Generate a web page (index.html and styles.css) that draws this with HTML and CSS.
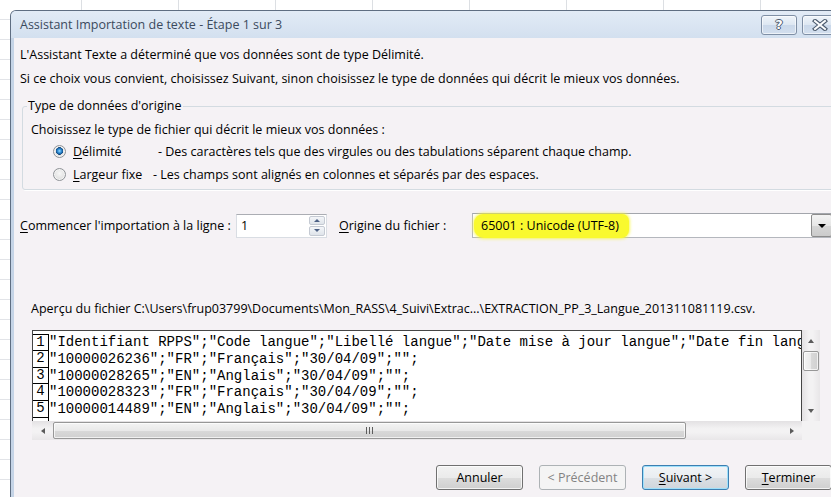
FILE: index.html
```html
<!DOCTYPE html>
<html lang="fr">
<head>
<meta charset="utf-8">
<title>Assistant Importation de texte</title>
<link rel="stylesheet" href="styles.css">
</head>
<body>
<div class="window">
  <div class="titlebar">
    <span class="title">Assistant Importation de texte - Étape 1 sur 3</span>
    <div class="caption-buttons">
      <div class="cap-btn"><span class="help-glyph">?</span></div>
      <div class="cap-btn">
        <svg width="16" height="12" viewBox="0 0 16 12">
          <path d="M3 2 L13 10 M13 2 L3 10" stroke="#4b5a6d" stroke-width="4.2" stroke-linecap="square" fill="none"/>
          <path d="M3 2 L13 10 M13 2 L3 10" stroke="#fbfcfd" stroke-width="2" stroke-linecap="square" fill="none"/>
        </svg>
      </div>
    </div>
  </div>

  <div class="client">
    <p class="intro">L'Assistant Texte a déterminé que vos données sont de type Délimité.</p>
    <p class="intro">Si ce choix vous convient, choisissez Suivant, sinon choisissez le type de données qui décrit le mieux vos données.</p>

    <fieldset class="group">
      <legend>Type de données d'origine</legend>
      <p class="hint">Choisissez le type de fichier qui décrit le mieux vos données :</p>
      <div class="option">
        <span class="radio checked"></span>
        <span class="opt-label"><u>D</u>élimité</span>
        <span>- Des caractères tels que des virgules ou des tabulations séparent chaque champ.</span>
      </div>
      <div class="option">
        <span class="radio"></span>
        <span class="opt-label narrow"><u>L</u>argeur fixe</span>
        <span>- Les champs sont alignés en colonnes et séparés par des espaces.</span>
      </div>
    </fieldset>

    <div class="start-row">
      <span class="start-label"><u>C</u>ommencer l'importation à la ligne :</span>
      <div class="spinner">
        <span class="spin-value">1</span>
        <div class="spin-btns">
          <span class="spin"><span class="tri-up small"></span></span>
          <span class="spin"><span class="tri-down small"></span></span>
        </div>
      </div>
      <span class="origin-label"><u>O</u>rigine du fichier :</span>
      <div class="combo">
        <span class="combo-value"><span class="marker">65001 : Unicode (UTF-8)</span></span>
        <span class="combo-arrow"><span class="tri-down black"></span></span>
      </div>
    </div>

    <p class="caption">Aperçu du fichier C:\Users\frup03799\Documents\Mon_RASS\4_Suivi\Extrac...\EXTRACTION_PP_3_Langue_201311081119.csv.</p>

    <div class="preview">
      <div class="preview-main">
        <div class="preview-text">
          <div class="row"><span class="num first">1</span><span class="line">"Identifiant RPPS";"Code langue";"Libellé langue";"Date mise à jour langue";"Date fin langue"</span></div>
          <div class="row"><span class="num">2</span><span class="line">"10000026236";"FR";"Français";"30/04/09";"";</span></div>
          <div class="row"><span class="num">3</span><span class="line">"10000028265";"EN";"Anglais";"30/04/09";"";</span></div>
          <div class="row"><span class="num">4</span><span class="line">"10000028323";"FR";"Français";"30/04/09";"";</span></div>
          <div class="row"><span class="num">5</span><span class="line">"10000014489";"EN";"Anglais";"30/04/09";"";</span></div>
          <div class="row"><span class="num"></span></div>
        </div>
        <div class="vscroll">
          <span class="sb-btn v"><span class="tri-up"></span></span>
          <span class="vthumb"></span>
          <span class="vtrack"></span>
          <span class="sb-btn v"><span class="tri-down"></span></span>
        </div>
      </div>
      <div class="hscroll-row">
        <div class="hscroll">
          <span class="sb-btn h"><span class="tri-left"></span></span>
          <span class="hthumb"><span class="grip"></span></span>
          <span class="htrack"></span>
          <span class="sb-btn h"><span class="tri-right"></span></span>
        </div>
        <div class="corner"></div>
      </div>
    </div>

    <div class="buttons">
      <button class="btn">Annuler</button>
      <button class="btn disabled">&lt; Précédent</button>
      <button class="btn default"><span><u>S</u>uivant &gt;</span></button>
      <button class="btn"><span><u>T</u>erminer</span></button>
    </div>
  </div>
</div>
</body>
</html>
```

FILE: styles.css
```css
* { box-sizing: border-box; }

html, body { margin: 0; }

/* spreadsheet grid showing around the dialog */
body {
  width: 831px;
  height: 497px;
  overflow: hidden;
  background-color: #fff;
  background-image:
    repeating-linear-gradient(90deg, transparent 0 81px, #dcdfe3 81px 82px, transparent 82px 97px),
    repeating-linear-gradient(180deg, transparent 0 19px, #e2e4e8 19px 20px);
  font-family: "Open Sans", "Liberation Sans", sans-serif;
  font-size: 12.5px;
  color: #000;
}

u { text-decoration-thickness: 1px; text-underline-offset: 2px; }

/* dialog frame */
.window {
  margin: 10px 0 0 10px;
  width: 840px;
  height: 495px;
  border: 1px solid #5f6e82;
  border-bottom: 0;
  border-radius: 6px 6px 0 0;
  background: #c5d4e6;
}

.titlebar {
  height: 27px;
  display: flex;
  align-items: center;
  justify-content: space-between;
  padding: 0 11px 0 9px;
  background: linear-gradient(#e2ebf6, #d3e0ef);
  border-radius: 5px 5px 0 0;
  color: #3b4a5d;
}

.caption-buttons { display: flex; gap: 5px; }

.cap-btn {
  width: 36px;
  height: 20px;
  border: 1px solid #7f8fa5;
  border-radius: 3px;
  background: linear-gradient(#eff4fa, #dde7f2 50%, #cad8ea 51%, #d3dfee);
  box-shadow: inset 0 0 0 1px rgba(255, 255, 255, 0.6);
  display: flex;
  align-items: center;
  justify-content: center;
}

.help-glyph {
  font-family: "DejaVu Sans", sans-serif;
  font-weight: bold;
  font-size: 13px;
  line-height: 1;
  color: #fbfcfd;
  text-shadow: 1px 0 #4b5a6d, -1px 0 #4b5a6d, 0 1px #4b5a6d, 0 -1px #4b5a6d;
}

/* dialog body */
.client {
  margin: 0 3px;
  height: 470px;
  padding-top: 9px;
  background: #f5f2f5;
  overflow: hidden;
}

p { margin: 0; line-height: 16px; }

.intro { padding-left: 6px; }
.intro + .intro { margin-top: 8px; }

.group {
  margin: 11px 8px 0;
  padding: 0 0 3px 4px;
  border: 1px solid #d3dbe1;
  border-radius: 3px;
  box-shadow: 1px 1px 0 #fff;
  min-width: 0;
}

.group legend { padding: 0 1px; line-height: 16px; }

.hint { margin: 8px 0 2px 4px; }

.option {
  display: flex;
  align-items: center;
  height: 23px;
  padding-left: 26px;
}

.radio {
  flex: none;
  width: 13px;
  height: 13px;
  margin-right: 7px;
  border-radius: 50%;
  border: 1px solid #8f9397;
  background: radial-gradient(circle at 50% 40%, #f7f7f7, #dcdcdc 80%);
  box-shadow: inset 0 0 0 1px #f4f4f4;
}

.radio.checked {
  background:
    radial-gradient(circle at 50% 45%, #9fdcff 0, #3a9ae0 1.6px, #175a99 3.2px, #0f3f70 3.6px, transparent 4px),
    radial-gradient(circle at 50% 40%, #f7f7f7, #dcdcdc 80%);
}

.opt-label { width: 85px; flex: none; }
.opt-label.narrow { width: 80px; }

/* start line + file origin */
.start-row {
  margin-top: 23px;
  height: 25px;
  display: flex;
  align-items: center;
  padding: 0 13px 0 6px;
}

.start-label { width: 216px; flex: none; }

.spinner {
  width: 91px;
  height: 24px;
  flex: none;
  display: flex;
  background: #fff;
  border: 1px solid #d9dde3;
  border-top-color: #abadb3;
}

.spin-value { flex: 1; padding-left: 4px; line-height: 22px; }

.spin-btns {
  width: 18px;
  display: flex;
  flex-direction: column;
  gap: 1px;
  padding: 1px;
}

.spin {
  flex: 1;
  display: flex;
  align-items: center;
  justify-content: center;
  border: 1px solid #c5cad3;
  border-radius: 2px;
  background: linear-gradient(#f4f6f9, #dfe4ea);
}

.origin-label { margin-left: 12px; width: 133px; flex: none; }

.combo {
  flex: 1;
  height: 25px;
  display: flex;
  background: #fff;
  border: 1px solid #b4b7bd;
  border-top-color: #a3a6ac;
}

.combo-value { flex: 1; display: flex; align-items: center; padding-left: 1px; }

.marker {
  height: 24px;
  line-height: 24px;
  padding: 0 10px 0 7px;
  background: #f9f92e;
  border-radius: 9px 7px 8px 10px;
  box-shadow: 0 0 3px 1px rgba(246, 246, 60, 0.8);
}

.combo-arrow {
  width: 21px;
  display: flex;
  align-items: center;
  justify-content: center;
  border: 1px solid #8c8c8c;
  border-radius: 2px;
  background: linear-gradient(#f3f3f3, #e6e6e6 50%, #d6d6d6 51%, #cbcbcb);
}

/* small triangles for arrows */
.tri-up, .tri-down { width: 0; height: 0; border-left: 3.5px solid transparent; border-right: 3.5px solid transparent; }
.tri-up { border-bottom: 4px solid #5b5b5b; }
.tri-down { border-top: 4px solid #5b5b5b; }
.tri-up.small { border-bottom-color: #4d6185; border-left-width: 3px; border-right-width: 3px; border-bottom-width: 3px; }
.tri-down.small { border-top-color: #4d6185; border-left-width: 3px; border-right-width: 3px; border-top-width: 3px; }
.tri-down.black { border-top-color: #000; border-left-width: 4px; border-right-width: 4px; }
.tri-left, .tri-right { width: 0; height: 0; border-top: 3.5px solid transparent; border-bottom: 3.5px solid transparent; }
.tri-left { border-right: 4px solid #5b5b5b; }
.tri-right { border-left: 4px solid #5b5b5b; }

.caption { margin-top: 63px; padding-left: 17px; }

/* file preview */
.preview { margin: 13px 0 0 18px; width: 788px; }

.preview-main { display: flex; height: 91px; }

.preview-text {
  width: 770px;
  flex: none;
  border: 1px solid #454545;
  border-bottom: 0;
  background: #fff;
  padding-top: 3px;
  overflow: hidden;
  font-family: "Liberation Mono", "Courier New", monospace;
  font-size: 14px;
}

.row { display: flex; height: 16.75px; line-height: 16.75px; white-space: pre; }

.num {
  width: 16px;
  flex: none;
  text-align: center;
  border-right: 1px solid #000;
  border-bottom: 1px solid #000;
  line-height: 15.75px;
}

.num.first { border-top: 1px solid #000; line-height: 14.75px; }

.line { padding-left: 0; }

.vscroll {
  width: 18px;
  display: flex;
  flex-direction: column;
  background: linear-gradient(90deg, #e3e1e3, #f3f2f3 40%, #f3f2f3 60%, #e8e6e8);
}

.sb-btn { flex: none; display: flex; align-items: center; justify-content: center; }
.sb-btn.v { height: 21px; }
.sb-btn.h { width: 21px; }

.vthumb {
  height: 20px;
  margin: 0 1px;
  border: 1px solid #979797;
  border-radius: 2px;
  background: linear-gradient(90deg, #f4f4f4, #e9e9e9 50%, #d9d9d9 51%, #d0d0d0);
  box-shadow: inset 0 0 0 1px rgba(255, 255, 255, 0.7);
}

.vtrack, .htrack { flex: 1; }

.hscroll-row { display: flex; height: 19px; }

.hscroll {
  width: 770px;
  display: flex;
  background: linear-gradient(#e3e1e3, #f3f2f3 40%, #f3f2f3 60%, #e8e6e8);
}

.hthumb {
  width: 633px;
  margin: 1px 0;
  display: flex;
  align-items: center;
  justify-content: center;
  border: 1px solid #979797;
  border-radius: 2px;
  background: linear-gradient(#f4f4f4, #e9e9e9 50%, #d9d9d9 51%, #d0d0d0);
  box-shadow: inset 0 0 0 1px rgba(255, 255, 255, 0.7);
}

.grip {
  width: 7px;
  height: 7px;
  background: repeating-linear-gradient(90deg, #5d5d5d 0 1px, transparent 1px 3px);
}

.corner { width: 18px; background: #f3f2f3; }

/* command buttons */
.buttons {
  margin-top: 25px;
  display: flex;
  justify-content: flex-end;
  gap: 16px;
  padding-right: 14px;
}

.btn {
  width: 87px;
  height: 25px;
  padding: 0;
  font: inherit;
  color: #000;
  border: 1px solid #707070;
  border-radius: 3px;
  background: linear-gradient(#f2f2f2, #ebebeb 50%, #dddddd 51%, #cfcfcf);
  box-shadow: inset 0 0 0 1px rgba(255, 255, 255, 0.75);
  display: flex;
  align-items: center;
  justify-content: center;
}

.btn.disabled {
  color: #838383;
  border-color: #adb2b5;
  background: #f4f4f4;
  box-shadow: none;
}

.btn.default {
  border-color: #3c7fb1;
  box-shadow: inset 0 0 0 1px #9ee0fb;
  background: linear-gradient(#f1f4f7, #e9edf1 50%, #dbe0e5 51%, #cfd5db);
}
```
